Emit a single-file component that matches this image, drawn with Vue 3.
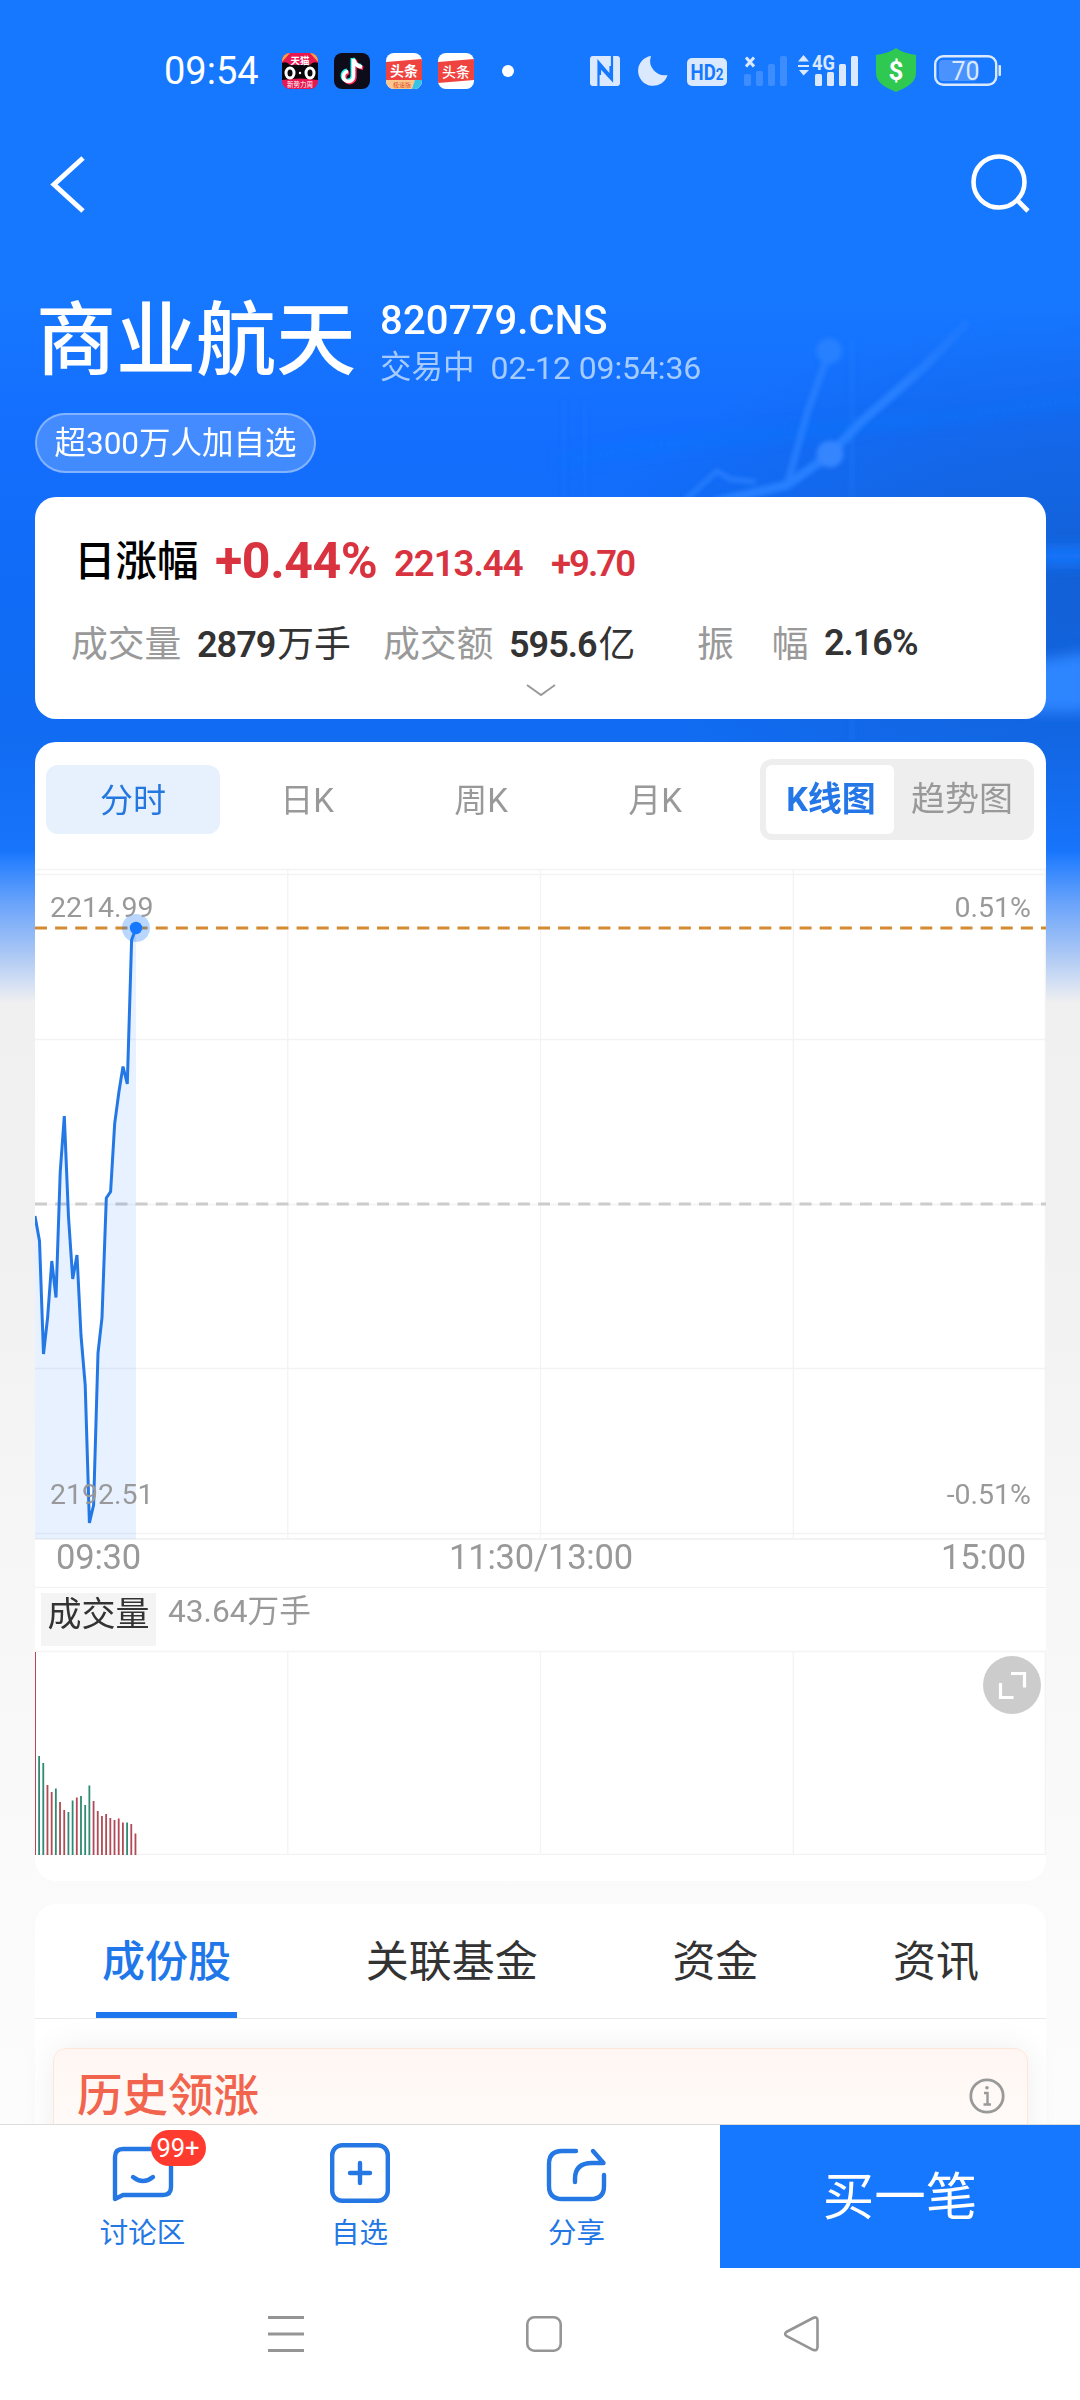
<script setup>
const periods = ['分时', '日K', '周K', '月K']
const sections = ['成份股', '关联基金', '资金', '资讯']

const pricePoints = [
  [35, 1216], [39.5, 1241], [43.5, 1354], [47.6, 1317.6], [51.8, 1261], [56, 1297.5],
  [60.2, 1172.5], [64.3, 1116], [68.5, 1217], [72.7, 1279], [77, 1255], [81, 1335.5],
  [85.2, 1385], [89.4, 1523], [93.6, 1505], [98, 1353], [102, 1317.6], [106.3, 1198],
  [110.6, 1191.7], [114.7, 1123.4], [118.9, 1092], [123, 1066.5], [127.3, 1084],
  [131.6, 940], [136, 928],
].map(([x, y]) => [x - 35, y - 868])

const line = pricePoints.map((p) => p.join(',')).join(' ')
const area = `0,671 ${line} 101,671`

const volumes = [
  [203, 'r'], [99, 'g'], [92, 'g'], [70, 'r'], [63, 'r'], [66.5, 'g'], [53, 'r'], [45, 'r'],
  [43, 'g'], [54.5, 'g'], [57.5, 'r'], [59, 'g'], [50, 'g'], [69.5, 'g'], [54, 'r'], [44, 'r'],
  [39, 'r'], [41, 'r'], [37, 'r'], [35, 'r'], [36.5, 'r'], [32.5, 'r'], [32.5, 'g'], [31, 'r'],
  [21.5, 'r'],
]
</script>

<template>
  <div class="phone">
    <div class="scroll">
      <svg class="backdrop" width="1080" height="860" viewBox="0 0 1080 860" fill="none">
        <defs>
          <filter id="soft" filterUnits="userSpaceOnUse" x="0" y="200" width="1080" height="600"><feGaussianBlur stdDeviation="2" /></filter>
          <filter id="haze" filterUnits="userSpaceOnUse" x="0" y="200" width="1120" height="600"><feGaussianBlur stdDeviation="7" /></filter>
          <linearGradient id="trail" gradientUnits="userSpaceOnUse" x1="900" y1="390" x2="968" y2="318">
            <stop offset="0" stop-color="#2880ff" /><stop offset="1" stop-color="#2880ff" stop-opacity=".3" />
          </linearGradient>
          <radialGradient id="shade" gradientUnits="userSpaceOnUse" cx="0" cy="0" r="1" gradientTransform="translate(1110 580) scale(520 270)">
            <stop offset="0" stop-color="#1557bb" stop-opacity=".55" /><stop offset=".5" stop-color="#1557bb" stop-opacity=".33" /><stop offset="1" stop-color="#1557bb" stop-opacity="0" />
          </radialGradient>
        </defs>
        <rect width="1080" height="860" fill="url(#shade)" />
        <g filter="url(#haze)">
          <path d="M560 462C700 430 900 432 1090 396" stroke="#1677ff" stroke-width="9" opacity=".5" />
          <path d="M1040 556H1090" stroke="#1478ff" stroke-width="16" />
          <path d="M1030 662L1090 652V712H1030Z" fill="#2f86ff" />
        </g>
        <g filter="url(#soft)" stroke="#2880ff">
          <path d="M680 505L717 471L730 479L756 482" stroke-width="5" opacity=".85" />
          <path d="M715 502L787 485L828 456L862 421L925 366L968 322" stroke="url(#trail)" stroke-width="9" />
          <path d="M787 485L808 410L829 352" stroke-width="7" opacity=".85" />
          <path d="M852 340V740" stroke-width="6" opacity=".22" />
          <path d="M564 400V500M585 400V500" stroke-width="4" opacity=".15" />
          <circle cx="829" cy="351" r="13" fill="#2880ff" stroke="none" />
          <circle cx="830" cy="454" r="13.500" fill="#3485ff" stroke="none" />
        </g>
      </svg>

      <div class="status">
        <span class="clock">09:54</span>
        <svg class="app" width="36" height="36" viewBox="0 0 36 36">
          <clipPath id="rc"><rect width="36" height="36" rx="8" /></clipPath>
          <g clip-path="url(#rc)">
            <rect width="36" height="36" fill="#e8174f" />
            <path d="M0 0h8L0 9zM36 0h-8l8 9z" fill="#f4a04a" />
            <path d="M0 10Q5 8 8 12H28Q31 8 36 10V27Q18 24 0 27Z" fill="#08060a" />
            <text x="18" y="11" font-size="9.500" font-weight="700" fill="#fff" text-anchor="middle">天猫</text>
            <ellipse cx="8" cy="20" rx="4" ry="5" fill="none" stroke="#fff" stroke-width="3" />
            <ellipse cx="28" cy="20" rx="4" ry="5" fill="none" stroke="#fff" stroke-width="3" />
            <circle cx="18" cy="20" r="1.200" fill="#fff" />
            <text x="18" y="34" font-size="6.500" fill="#fff" text-anchor="middle">新势力周</text>
          </g>
        </svg>
        <svg class="app" width="36" height="36" viewBox="0 0 36 36" fill="none">
          <rect width="36" height="36" rx="8" fill="#0d0c1a" />
          <path d="M19.500 6V23.500A5 5 0 1 1 14 18.500M19.500 6Q21 13 28 14" stroke="#25f4ee" stroke-width="4" transform="translate(-1 -1)" />
          <path d="M19.500 6V23.500A5 5 0 1 1 14 18.500M19.500 6Q21 13 28 14" stroke="#fe2c55" stroke-width="4" transform="translate(1.200 1)" />
          <path d="M19.500 6V23.500A5 5 0 1 1 14 18.500M19.500 6Q21 13 28 14" stroke="#fff" stroke-width="3.600" />
        </svg>
        <svg class="app" width="36" height="36" viewBox="0 0 36 36">
          <g clip-path="url(#rc)">
            <rect width="36" height="36" fill="#fff" />
            <path d="M0 9L36 6V27H0Z" fill="#ef4340" />
            <path d="M0 27H36V36H0Z" fill="#ffc58c" />
            <path d="M29 27H36V36H26Z" fill="#35c3e8" />
            <text x="18" y="22.500" font-size="14" font-weight="700" fill="#fff" text-anchor="middle">头条</text>
            <text x="16" y="34.300" font-size="6" fill="#d8502a" text-anchor="middle">极速版</text>
          </g>
        </svg>
        <svg class="app" width="36" height="36" viewBox="0 0 36 36">
          <g clip-path="url(#rc)">
            <rect width="36" height="36" fill="#fff" />
            <path d="M0 9L36 6V27L0 30Z" fill="#ef4340" />
            <text x="18" y="23.500" font-size="14" font-weight="500" fill="#fff" text-anchor="middle">头条</text>
          </g>
        </svg>
        <i class="more-dot"></i>

        <svg class="sys" width="412" height="48" viewBox="590 47 412 48" fill="#dbe9ff">
          <rect x="590" y="56" width="30" height="30" rx="3" />
          <path d="M598.500 86V62L610.500 76V66M612 56V80L600 67V75" fill="none" stroke="#1677ff" stroke-width="2.200" />
          <path d="M651 56A15 15 0 1 0 667.500 75A14.500 14.500 0 0 1 651 56Z" />
          <rect x="687" y="58" width="40" height="28" rx="5" />
          <text x="690.500" y="80" font-size="22" font-weight="700" fill="#1677ff" textLength="33" lengthAdjust="spacingAndGlyphs">HD<tspan font-size="16">2</tspan></text>
          <path d="M746 57.500L754 66.500M754 57.500L746 66.500" stroke="#dbe9ff" stroke-width="3" />
          <g fill="#3d8dff">
            <rect x="744" y="74" width="7" height="12" rx="2" /><rect x="756" y="71" width="7" height="15" rx="2" />
            <rect x="768" y="64" width="7" height="22" rx="2" /><rect x="780" y="56" width="7" height="30" rx="2" />
          </g>
          <path d="M798 62.500L803.500 56L809 62.500ZM798 66H809V68H798ZM799 71L803.500 76.500L809 71Z" transform="translate(0 -1)" />
          <text x="812" y="70" font-size="21" font-weight="700" textLength="23" lengthAdjust="spacingAndGlyphs">4G</text>
          <rect x="815" y="74" width="7" height="12" rx="1.500" /><rect x="827" y="72" width="7" height="14" rx="1.500" />
          <rect x="839" y="64" width="7" height="22" rx="1.500" /><rect x="851" y="56" width="7" height="30" rx="1.500" />
          <path d="M896 48C902 52 909 54 916 55V73C916 82 908 87 896 92C884 87 876 82 876 73V55C883 54 890 52 896 48Z" fill="#2fc850" />
          <text x="896" y="79.500" font-size="26" font-weight="700" fill="#fff" text-anchor="middle">$</text>
          <rect x="935.200" y="56.200" width="61" height="28.600" rx="8" fill="none" stroke="#dbe9ff" stroke-width="2.400" />
          <rect x="939" y="60" width="38" height="21" rx="4" fill="#4a93ff" />
          <rect x="998.500" y="65" width="2.500" height="11" rx="1" />
          <text x="965.500" y="79.500" font-size="25" text-anchor="middle">70</text>
        </svg>
      </div>

      <div class="topbar">
        <svg width="38" height="58" viewBox="0 0 38 58" fill="none" stroke="#fff" stroke-width="5"><path d="M34 3L5 29.500L34 56" /></svg>
        <svg width="62" height="62" viewBox="0 0 62 62" fill="none" stroke="#fff" stroke-width="4.600"><circle cx="29" cy="29" r="25.500" /><path d="M47 47L58 58" /></svg>
      </div>

      <div class="heading">
        <div class="name">商业航天</div>
        <div class="meta">
          <div class="code">820779.CNS</div>
          <div class="time"><span>交易中</span><span>02-12 09:54:36</span></div>
        </div>
      </div>
      <div class="pill">超300万人加自选</div>

      <section class="card quote">
        <div class="row main">
          <span class="label">日涨幅</span>
          <span class="pct">+0.44%</span>
          <span class="num">2213.44</span>
          <span class="num delta">+9.70</span>
        </div>
        <div class="row stats">
          <span class="k">成交量</span><span class="v"><b>2879</b>万手</span>
          <span class="k">成交额</span><span class="v"><b>595.6</b>亿</span>
          <span class="k wide"><i>振</i><i>幅</i></span><span class="v"><b>2.16%</b></span>
        </div>
        <svg class="chev" width="32" height="14" viewBox="0 0 32 14" fill="none" stroke="#999" stroke-width="2"><path d="M2 2L16 12L30 2" /></svg>
      </section>

      <section class="card chart">
        <div class="tabs">
          <div class="periods">
            <span v-for="(p, i) in periods" :key="p" :class="{ on: i === 0 }">{{ p }}</span>
          </div>
          <div class="seg"><span class="on">K线图</span><span>趋势图</span></div>
        </div>

        <svg class="plot" width="1011" height="673" viewBox="0 0 1011 673">
          <g stroke="#f3f3f3" stroke-width="1.300">
            <path d="M0 1.500H1011M0 6.500H1011M0 171.500H1011M0 336.500H1011M0 500.500H1011M0 665.500H1011" />
            <path d="M0 671H1011" stroke-width="2" />
            <path d="M252.800 1V671M505.500 1V671M758.300 1V671M1010.300 1V671" />
          </g>
          <path d="M0 336H1011" stroke="#ccc" stroke-width="3" stroke-dasharray="12 8.120" />
          <path d="M0 60H1011" stroke="#d48a30" stroke-width="3" stroke-dasharray="12 8.120" />
          <polygon :points="area" fill="#1677ff" fill-opacity=".1" />
          <polyline :points="line" fill="none" stroke="#2378e6" stroke-width="3" stroke-linejoin="bevel" />
          <circle cx="101" cy="60" r="14" fill="#1677ff" fill-opacity=".3" />
          <circle cx="101" cy="60" r="6.200" fill="#1677ff" />
          <g class="tick">
            <text x="15" y="48.500">2214.99</text>
            <text x="15" y="635.500">2192.51</text>
            <text x="996" y="48.500" text-anchor="end">0.51%</text>
            <text x="996" y="635.500" text-anchor="end">-0.51%</text>
          </g>
        </svg>
        <div class="axis"><span>09:30</span><span>11:30/13:00</span><span>15:00</span></div>
        <div class="volhead"><span class="vl">成交量</span><span class="vv">43.64万手</span></div>
        <div class="volume">
          <svg width="1011" height="205" viewBox="0 0 1011 205">
            <g stroke="#f3f3f3" stroke-width="1.300">
              <path d="M0 1.500H1011M0 204.500H1011M252.800 1V204M505.500 1V204M758.300 1V204M1010.300 1V204" />
            </g>
            <rect
              v-for="(v, i) in volumes" :key="i"
              :x="i === 0 ? 0 : i * 4.19 - 1" :y="205 - v[0]" :width="i === 0 ? 1 : 1.8" :height="v[0]"
              :fill="v[1] === 'r' ? '#b34955' : '#2f8a73'"
            />
          </svg>
          <svg class="expand" width="58" height="58" viewBox="0 0 58 58" fill="none" stroke="#fff" stroke-width="3.200">
            <circle cx="29" cy="29" r="29" fill="#ccc" stroke="none" />
            <path d="M28 17.500H41.500V31.500M17.500 27V41.500H30.500" />
          </svg>
        </div>
      </section>

      <section class="card detail">
        <div class="sections">
          <span v-for="(s, i) in sections" :key="s" :class="{ on: i === 0 }">{{ s }}</span>
        </div>
        <div class="leader">
          <span>历史领涨</span>
          <svg width="36" height="36" viewBox="0 0 36 36" fill="none" stroke="#999" stroke-width="2.800">
            <circle cx="18" cy="18" r="16.200" /><path d="M15 15H18.500V26M14.500 26.500H22" stroke-width="2.400" />
            <circle cx="18" cy="9.800" r="1.800" fill="#999" stroke="none" />
          </svg>
        </div>
      </section>
    </div>

    <div class="actions">
      <div class="act">
        <div class="ico">
          <svg width="64" height="64" viewBox="0 0 64 64" fill="none" stroke="#2577e3" stroke-width="4.400" stroke-linecap="round" stroke-linejoin="round">
            <path d="M4 58V16Q4 8 12 8H52Q60 8 60 16V46Q60 54 52 54H12Z" /><path d="M22 36Q32 44 42 36" />
          </svg>
          <em>99+</em>
        </div>
        <span>讨论区</span>
      </div>
      <div class="act">
        <div class="ico">
          <svg width="64" height="64" viewBox="0 0 64 64" fill="none" stroke="#2577e3" stroke-width="4.400" stroke-linecap="round">
            <rect x="4.200" y="4.200" width="55.600" height="55.600" rx="10" /><path d="M22 32H42M32 22V42" />
          </svg>
        </div>
        <span>自选</span>
      </div>
      <div class="act">
        <div class="ico">
          <svg width="64" height="64" viewBox="0 0 64 64" fill="none" stroke="#2577e3" stroke-width="4.400" stroke-linecap="round" stroke-linejoin="round">
            <path d="M31 10H17Q4 10 4 23V45Q4 58 17 58H46Q59 58 59 45V34" /><path d="M30 41V38Q30 22 47 22H58.500L48 10" />
          </svg>
        </div>
        <span>分享</span>
      </div>
      <button class="buy">买一笔</button>
    </div>

    <div class="sysnav">
      <svg width="36" height="36" viewBox="0 0 36 36" stroke="#959595" stroke-width="3"><path d="M0 1.500H36M0 18H36M0 34.500H36" /></svg>
      <svg width="36" height="36" viewBox="0 0 36 36" fill="none" stroke="#959595" stroke-width="2.600"><rect x="1.300" y="1.300" width="33.400" height="33.400" rx="7" /></svg>
      <svg width="36" height="36" viewBox="0 0 36 36" fill="none" stroke="#959595" stroke-width="2.600" stroke-linejoin="round"><path d="M2.300 16Q0 17.800 2.300 19.800L29 33.800Q33.500 35.500 33.500 31V4.500Q33.500 0 29 2Z" /></svg>
    </div>
  </div>
</template>

<style>
html, body { margin: 0; background: #fff; }
</style>

<style scoped>
.phone {
  width: 1080px; height: 2400px; display: flex; flex-direction: column; overflow: hidden; background: #fff;
  font-family: Roboto, "Noto Sans CJK SC", sans-serif; color: #333;
}
.phone * { box-sizing: border-box; }
.phone svg { display: block; flex: none; }
.scroll {
  position: relative; height: 2124px; flex: none; overflow: hidden;
  background: linear-gradient(180deg, #1677ff 0, #1677ff 300px, #146fff 420px, #106bf6 600px, #116cf2 740px, #1774fb 850px, #2a81fe 862px, #6ca5fa 905px, #a5c4f5 950px, #d6e1f3 985px, #f0f0f0 1003px, #f1f1f1 1250px, #f7f7f7 1600px, #fafafa 1850px, #fcfcfc 2124px);
}
.phone .backdrop { position: absolute; left: 0; top: 0; }
.status { position: relative; height: 142px; padding-left: 164px; display: flex; align-items: center; }
.clock { width: 118px; font-size: 38px; line-height: 44px; color: #fff; }
.app { margin-right: 16px; }
.more-dot { width: 12px; height: 12px; border-radius: 6px; background: #fff; margin-left: 12px; }
.sys { margin-left: 76px; }
.topbar { position: relative; height: 84px; padding: 0 48px 0 49px; display: flex; justify-content: space-between; align-items: center; }
.heading { position: relative; height: 164px; margin-top: 32px; padding: 22px 0 0 36px; display: flex; align-items: flex-start; }
.name { width: 344px; font-size: 80px; line-height: 123px; font-weight: 500; color: #fff; white-space: nowrap; }
.meta { padding-top: 18px; }
.code { font-size: 40px; line-height: 46px; font-weight: 500; letter-spacing: .15px; color: #fff; }
.time { display: flex; gap: 16px; font-size: 32px; line-height: 44px; margin-top: 2px; color: #a6ccff; }
.time span:first-child { font-size: 31.500px; }
.time span:last-child { letter-spacing: -.1px; }
.pill {
  position: relative; width: 281px; height: 60px; margin: -9px 0 0 35px; border: 2px solid rgba(255, 255, 255, .35); border-radius: 30px;
  background: rgba(255, 255, 255, .2); color: #fff; font-size: 31.500px; line-height: 58px; text-align: center; white-space: nowrap;
}
.card { position: relative; width: 1011px; margin-left: 35px; background: #fff; border-radius: 21px; }
.quote { height: 222px; margin-top: 24px; padding-top: 31px; }
.row { display: grid; align-items: center; white-space: nowrap; }
.main { grid-template-columns: 141px 179px 157px 150px; padding-left: 39px; height: 60px; color: #d9333f; }
.label { color: #000; font-size: 41.500px; font-weight: 500; padding-bottom: 5px; }
.pct { font-size: 50px; font-weight: 700; letter-spacing: -.4px; }
.num { font-size: 36.500px; font-weight: 600; letter-spacing: -1px; padding-top: 6px; }
.delta { letter-spacing: -2px; }
.stats { grid-template-columns: 126px 186px 126px 188px 127px 120px; padding-left: 36px; height: 56px; margin-top: 25px; font-size: 36.800px; }
.k { color: #999; }
.v { color: #333; }
.v b { font-size: 36px; font-weight: 600; letter-spacing: -1px; margin-right: 2px; }
.stats .v:last-child { padding-top: 3px; }
.wide { display: flex; gap: 38px; }
.wide i { font-style: normal; }
.chev { margin: 14px auto 0; }
.chart { height: 1139px; margin-top: 23px; padding-top: 17px; }
.tabs { display: flex; justify-content: space-between; align-items: center; height: 81px; padding: 0 12px 0 11px; }
.periods { display: flex; }
.periods span { width: 174px; height: 69px; line-height: 71px; text-align: center; font-size: 33px; color: #999; border-radius: 12px; }
.periods .on { background: #e7f1fd; color: #2577e0; }
.seg { width: 274px; height: 81px; padding: 6px; display: flex; background: #eee; border-radius: 12px; color: #999; font-size: 34px; }
.seg span { flex: 1; height: 69px; line-height: 69px; padding-left: 2px; text-align: center; white-space: nowrap; }
.seg .on { flex: none; width: 128px; background: #fff; border-radius: 6px; color: #2577e8; font-weight: 700; }
.plot { margin-top: 28px; }
.tick { font-size: 28.500px; fill: #999; }
.axis { height: 47px; padding: 0 20px 0 21px; display: grid; grid-template-columns: 1fr 1fr 1fr; border-bottom: 1px solid #f1f1f1; font-size: 34.500px; line-height: 32px; color: #999; letter-spacing: -.2px; }
.axis span:nth-child(2) { text-align: center; }
.axis span:nth-child(3) { text-align: right; }
.volhead { display: flex; height: 62px; padding: 5px 0 0 6px; }
.vl { width: 115px; height: 53px; background: #f4f4f4; text-align: center; font-size: 34px; line-height: 42px; color: #333; }
.vv { margin-left: 12px; font-size: 31.700px; line-height: 38px; color: #999; }
.volume { position: relative; }
.phone .expand { position: absolute; left: 948px; top: 6px; }
.detail { height: 300px; margin-top: 23px; }
.sections { height: 115px; padding-left: 61px; display: flex; gap: 122.700px; border-bottom: 1px solid #eaeaea; }
.sections span { padding: 0 6px; font-size: 43px; line-height: 117px; height: 114px; white-space: nowrap; }
.sections .on { color: #2077ea; font-weight: 500; border-bottom: 6px solid #1f77f0; }
.leader {
  width: 975px; height: 200px; margin: 29px 0 0 18px; padding: 25px 22px 0 23px; display: flex; justify-content: space-between;
  border: 1px solid #fde6d9; border-radius: 13px; background: linear-gradient(#fff6f3, #fffaf7 60px, #fffbf9);
  box-shadow: 0 0 34px rgba(0, 0, 0, .07); color: #f1654f; font-size: 45.500px; line-height: 46px; font-weight: 500;
}
.leader svg { margin-top: 4px; }
.actions { position: relative; height: 144px; flex: none; display: flex; background: #fff; border-top: 1px solid #dcdcdc; padding-left: 34px; }
.act { width: 217px; display: flex; flex-direction: column; align-items: center; padding-top: 16px; color: #2577e3; font-size: 28.500px; }
.act > span { line-height: 40px; margin-top: 9px; }
.ico { position: relative; width: 64px; height: 64px; }
.ico em {
  position: absolute; left: 40px; top: -11px; width: 55px; height: 36px; border-radius: 18px; background: #ff3b30; color: #fff;
  font-style: normal; font-size: 25.500px; line-height: 37px; text-align: center;
}
.buy { width: 360px; margin-left: auto; height: 143px; padding: 0; border: 0; background: #1677ff; color: #fff; font: 400 51.500px/146px Roboto, "Noto Sans CJK SC", sans-serif; }
.sysnav { flex: 1; padding: 48px 260px 0 268px; display: flex; justify-content: space-between; align-items: flex-start; }
</style>
